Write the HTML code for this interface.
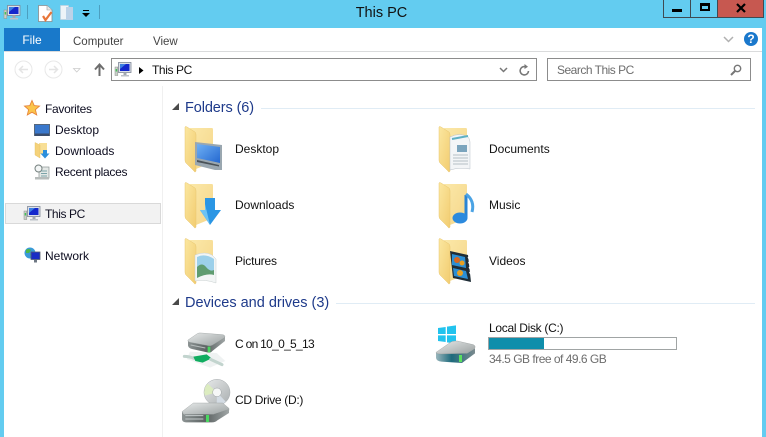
<!DOCTYPE html>
<html><head><meta charset="utf-8"><title>This PC</title>
<style>
html,body{margin:0;padding:0;width:766px;height:437px;overflow:hidden;background:#63ccf0}
body{position:relative;font-family:"Liberation Sans",sans-serif;font-size:12px;color:#000}
.a{position:absolute}
.t{position:absolute;white-space:nowrap;line-height:14px}
.h{position:absolute;white-space:nowrap;font-size:14.5px;line-height:18px;color:#1e3a8a}
svg{position:absolute;overflow:visible}
</style></head><body>
<svg width="0" height="0" style="position:absolute"><defs>
<linearGradient id="fb" x1="0" y1="0" x2="1" y2="1"><stop offset="0" stop-color="#fbe8a8"/><stop offset="1" stop-color="#f5d68a"/></linearGradient>
<linearGradient id="ff" x1="0" y1="0" x2="1" y2="1"><stop offset="0" stop-color="#fbe7a0"/><stop offset="1" stop-color="#f2cc70"/></linearGradient>
<linearGradient id="top" x1="0" y1="0" x2="1" y2="1"><stop offset="0" stop-color="#e6e9e9"/><stop offset="1" stop-color="#9ba1a1"/></linearGradient>
<linearGradient id="frn" x1="0" y1="0" x2="1" y2="0"><stop offset="0" stop-color="#8d9494"/><stop offset=".5" stop-color="#5b6262"/><stop offset="1" stop-color="#a0a6a6"/></linearGradient>
<linearGradient id="tealf" x1="0" y1="0" x2="1" y2="0"><stop offset="0" stop-color="#9ab6bc"/><stop offset=".4" stop-color="#1d6a7c"/><stop offset="1" stop-color="#7b8a8e"/></linearGradient>
<linearGradient id="cd" x1="0" y1="0" x2="1" y2="1"><stop offset="0" stop-color="#e8eaea"/><stop offset="1" stop-color="#a9aeb0"/></linearGradient>
<linearGradient id="scr" x1="0" y1="0" x2="1" y2="1"><stop offset="0" stop-color="#6fb0f4"/><stop offset="1" stop-color="#2468d0"/></linearGradient>
<g id="folder"><path d="M5 3H27Q28 3 28 5V37L11 44Z" fill="url(#fb)"/><path d="M0 2Q0 1 2 2L10 7Q11 8 11 10V46Q10 48 9 46L1 38Q0 37 0 35Z" fill="url(#ff)" stroke="#e8c670" stroke-width=".5"/></g>
<g id="pc"><rect x="3.500" y="1.500" width="12.500" height="10" fill="#dde1e8" stroke="#7f8896" stroke-width=".8"/><rect x="5" y="3" width="9.500" height="7" fill="#1428cc"/><path d="M5 3h6l-6 5z" fill="#3d80e2"/><rect x="8.500" y="11.500" width="3" height="2.500" fill="#a2a8b0"/><rect x="6" y="14" width="8" height="1.500" fill="#bcc1c8"/><rect x="0" y="6" width="2.800" height="8.500" fill="#c9cfc9" stroke="#8b938b" stroke-width=".5"/><rect x=".7" y="8" width="1.400" height="2.500" fill="#45c45a"/></g>
</defs></svg>

<!-- title bar -->
<svg style="left:4px;top:4px" width="17" height="16" viewBox="0 0 17 16"><use href="#pc"/></svg>
<div class="a" style="left:27px;top:5px;width:1px;height:14px;background:#4c9fc0"></div>
<svg style="left:38px;top:5px" width="15" height="17" viewBox="0 0 15 17"><path d="M.5 .5H9L14 5V16.500H.5Z" fill="#fff" stroke="#8a8a8a" stroke-width=".8"/><path d="M9 .5V5H14" fill="#e8e8e8" stroke="#999" stroke-width=".6"/><path d="M5 11L7.500 15L13.500 7" fill="none" stroke="#e8763a" stroke-width="2.200"/></svg>
<svg style="left:60px;top:5px" width="14" height="16" viewBox="0 0 14 16"><rect x=".5" y=".5" width="8" height="14" fill="#eef3f8" stroke="#c3d0df" stroke-width=".7"/><rect x="6" y="2" width="7" height="13" fill="#bcd2e8"/></svg>
<svg style="left:82px;top:10px" width="8" height="8" viewBox="0 0 8 8"><rect x="1" y="0" width="6" height="1" fill="#000"/><path d="M0 3H8L4 7Z" fill="#000"/></svg>
<div class="a" style="left:99px;top:5px;width:1px;height:14px;background:#4c9fc0"></div>
<div class="t" style="left:330px;width:103px;text-align:center;top:5px;font-size:14.500px;line-height:16px;color:#111">This PC</div>

<!-- window buttons -->
<div class="a" style="left:663px;top:0;width:28px;height:18px;border:1px solid #3f4a52;border-top:0;box-sizing:border-box;background:#63ccf0"></div>
<div class="a" style="left:672px;top:9px;width:10px;height:3px;background:#000"></div>
<div class="a" style="left:691px;top:0;width:27px;height:18px;border:1px solid #3f4a52;border-top:0;border-left:0;box-sizing:border-box;background:#63ccf0"></div>
<div class="a" style="left:700px;top:3px;width:10px;height:8px;border:2px solid #000;border-top-width:3px;box-sizing:border-box"></div>
<div class="a" style="left:718px;top:0;width:46px;height:18px;border:1px solid #3f4a52;border-top:0;border-left:0;box-sizing:border-box;background:#c75850"></div>
<svg style="left:736px;top:4px" width="10" height="8" viewBox="0 0 10 8"><path d="M1 0L9 8M9 0L1 8" stroke="#000" stroke-width="2.200" fill="none"/></svg>

<!-- main white area -->
<div class="a" style="left:4px;top:28px;width:758px;height:409px;background:#fff"></div>
<div class="a" style="left:4px;top:51px;width:758px;height:1px;background:#dadbdc"></div>
<div class="a" style="left:4px;top:28px;width:56px;height:23px;background:#1979ca"></div>
<div class="t" style="left:4px;width:56px;text-align:center;top:33px;color:#fff">File</div>
<div class="t" style="left:73px;top:35px;font-size:11.500px;color:#444">Computer</div>
<div class="t" style="left:153px;top:35px;font-size:11.500px;color:#444">View</div>
<svg style="left:723px;top:36px" width="11" height="7" viewBox="0 0 11 7"><path d="M1 1L5.500 5.500L10 1" fill="none" stroke="#b0b0b0" stroke-width="1.500"/></svg>
<div class="a" style="left:744px;top:32px;width:14px;height:14px;border-radius:50%;background:#1a78cc;color:#fff;font-weight:bold;font-size:12px;line-height:14px;text-align:center">?</div>

<!-- nav -->
<svg style="left:14px;top:60px" width="20" height="20" viewBox="0 0 20 20"><circle cx="9.500" cy="9.500" r="8.500" fill="none" stroke="#e8e8e8"/><path d="M14 9.500H6M9 6L5.500 9.500L9 13" fill="none" stroke="#e4e4e4" stroke-width="1.500"/></svg>
<svg style="left:44px;top:60px" width="20" height="20" viewBox="0 0 20 20"><circle cx="9.500" cy="9.500" r="8.500" fill="none" stroke="#e8e8e8"/><path d="M5 9.500H13M10 6L13.500 9.500L10 13" fill="none" stroke="#e4e4e4" stroke-width="1.500"/></svg>
<svg style="left:73px;top:68px" width="8" height="5" viewBox="0 0 8 5"><path d="M.5 .5H7L3.750 4Z" fill="#fff" stroke="#ccc" stroke-width=".8"/></svg>
<svg style="left:94px;top:63px" width="11" height="13" viewBox="0 0 11 13"><path d="M5.500 13V2M1 6.500L5.500 1.500L10 6.500" fill="none" stroke="#6d6d6d" stroke-width="2"/></svg>
<div class="a" style="left:111px;top:58px;width:426px;height:23px;border:1px solid #8c8c8c;box-sizing:border-box;background:#fff"></div>
<svg style="left:115px;top:61px" width="17" height="16" viewBox="0 0 17 16"><use href="#pc"/></svg>
<svg style="left:139px;top:67px" width="5" height="7" viewBox="0 0 5 7"><path d="M0 0L4.500 3.500L0 7Z" fill="#000"/></svg>
<div class="t" style="left:152px;top:63px;color:#111;letter-spacing:-.4px">This PC</div>
<svg style="left:499px;top:67px" width="9" height="6" viewBox="0 0 9 6"><path d="M1 1L4.500 4.500L8 1" fill="none" stroke="#777" stroke-width="1.500"/></svg>
<svg style="left:519px;top:64px" width="11" height="12" viewBox="0 0 11 12"><path d="M9.500 7A4.200 4.200 0 1 1 6 2.600" fill="none" stroke="#777" stroke-width="1.600"/><path d="M5.500 0L9 2.700L5.500 5Z" fill="#777"/></svg>
<div class="a" style="left:547px;top:58px;width:204px;height:23px;border:1px solid #8c8c8c;box-sizing:border-box;background:#fff"></div>
<div class="t" style="left:557px;top:63px;color:#6d6d6d;letter-spacing:-.5px">Search This PC</div>
<svg style="left:730px;top:64px" width="12" height="12" viewBox="0 0 12 12"><circle cx="7.500" cy="4.500" r="3.200" fill="none" stroke="#777" stroke-width="1.400"/><path d="M5 7L1 11" stroke="#777" stroke-width="2"/></svg>

<!-- sidebar -->
<div class="a" style="left:162px;top:86px;width:1px;height:351px;background:#f0f0f0"></div>
<svg style="left:24px;top:100px" width="16" height="16" viewBox="0 0 16 16"><path d="M8 .5L10.200 5.600L15.500 6.100L11.400 9.700L12.700 15L8 12.200L3.300 15L4.600 9.700L.5 6.100L5.800 5.600Z" fill="#fbc54c" stroke="#e8853a" stroke-width=".9"/></svg>
<div class="t" style="left:45px;top:102px;color:#0d0d20;letter-spacing:-.3px">Favorites</div>
<svg style="left:34px;top:124px" width="16" height="13" viewBox="0 0 16 13"><rect x=".5" y=".5" width="15" height="11" fill="#3a78cc" stroke="#56677c"/><rect x="1" y="9.500" width="14" height="2.500" fill="#3a4d6c"/></svg>
<div class="t" style="left:55px;top:123px;color:#0d0d20">Desktop</div>
<svg style="left:35px;top:142px" width="15" height="17" viewBox="0 0 15 17"><path d="M4 1H12V12H4Z" fill="#f8df96"/><path d="M0 .5L5 3V16L0 13Z" fill="#f5d27a" stroke="#e0bb60" stroke-width=".4"/><path d="M8 8H12V11.500H14.500L10 16.500L5.500 11.500H8Z" fill="#2c8fdc"/></svg>
<div class="t" style="left:55px;top:144px;color:#0d0d20">Downloads</div>
<svg style="left:34px;top:164px" width="16" height="16" viewBox="0 0 16 16"><rect x="5" y="3" width="10" height="11" fill="#e4e8e6" stroke="#8b9493" stroke-width=".7"/><circle cx="4.500" cy="4.500" r="3.500" fill="#f3f6f6" stroke="#75807f"/><path d="M7 7h6M7 9.500h6M7 12h6" stroke="#7ba3a8"/><rect x="1" y="13" width="14" height="2.500" fill="#b7bcbb"/></svg>
<div class="t" style="left:55px;top:165px;color:#0d0d20;letter-spacing:-.3px">Recent places</div>
<div class="a" style="left:5px;top:203px;width:156px;height:21px;background:#f2f2f2;border:1px solid #d9d9d9;box-sizing:border-box"></div>
<svg style="left:24px;top:205px" width="17" height="16" viewBox="0 0 17 16"><use href="#pc"/></svg>
<div class="t" style="left:45px;top:207px;color:#0d0d20;letter-spacing:-.4px">This PC</div>
<svg style="left:24px;top:247px" width="17" height="16" viewBox="0 0 17 16"><circle cx="6" cy="6" r="5.500" fill="#3a9ad9"/><path d="M2 3Q5 1 7 3L5 6L2 6ZM6 7L10 8L8 11Z" fill="#4cb848"/><rect x="7" y="5" width="9" height="7.500" fill="#1a2cc4" stroke="#55606e" stroke-width=".8"/><rect x="10" y="12.500" width="3" height="3" fill="#6f7884"/></svg>
<div class="t" style="left:45px;top:249px;color:#0d0d20">Network</div>

<!-- Folders header -->
<svg style="left:172px;top:103px" width="7" height="7" viewBox="0 0 7 7"><path d="M7 0V7H0Z" fill="#4a4a4a"/></svg>
<div class="h" style="left:185px;top:99px;letter-spacing:-.1px">Folders (6)</div>
<div class="a" style="left:261px;top:108px;width:494px;height:1px;background:#e0ecf5"></div>

<!-- folder items -->
<svg style="left:185px;top:125px" width="40" height="50" viewBox="0 0 40 50"><use href="#folder"/><path d="M10 17L37 20V45L30 45L10 40Z" fill="#9aa7b0"/><path d="M12 19L35 22V38L12 33Z" fill="url(#scr)"/><path d="M12 35L34 40V41.500L12 37Z" fill="#4a5258"/></svg>
<div class="t" style="left:235px;top:142px;color:#111">Desktop</div>
<svg style="left:185px;top:181px" width="40" height="50" viewBox="0 0 40 50"><use href="#folder"/><path d="M20 17H30V29H36L25 44L15 29H20Z" fill="#2b96e4"/><path d="M25 44L15 29H20V23Z" fill="#6cc3f4"/></svg>
<div class="t" style="left:235px;top:198px;color:#111">Downloads</div>
<svg style="left:185px;top:237px" width="40" height="50" viewBox="0 0 40 50"><use href="#folder"/><path d="M10 18Q20 14 27 18L31 22V46Q20 42 10 44Z" fill="#f2f5f5" stroke="#c9d0d0" stroke-width=".5"/><path d="M12 20Q20 16 29 22V36Q22 32 12 37Z" fill="#9cd0ea"/><path d="M12 39V30Q17 25 21 30T29 33V38Q22 36 12 41Z" fill="#5f9c70"/></svg>
<div class="t" style="left:235px;top:254px;color:#111;letter-spacing:-.2px">Pictures</div>

<svg style="left:439px;top:125px" width="40" height="50" viewBox="0 0 40 50"><use href="#folder"/><path d="M11 12Q21 7 29 12Q31 14 31 17V44Q21 42 11 45Z" fill="#f3f5f7" stroke="#b9c1c9" stroke-width=".5"/><path d="M13 14L29 11" stroke="#5fb0c4" stroke-width="2"/><rect x="18" y="20" width="10" height="7" fill="#7ba4bd"/><path d="M14 30H29M14 33H29M14 36H29M14 39H29" stroke="#b6bec5"/></svg>
<div class="t" style="left:489px;top:142px;color:#111">Documents</div>
<svg style="left:439px;top:181px" width="40" height="50" viewBox="0 0 40 50"><use href="#folder"/><path d="M27 14V37" stroke="#2b84d4" stroke-width="3"/><path d="M27 13Q36 20 33 31" fill="none" stroke="#4ba3e4" stroke-width="3"/><ellipse cx="21" cy="37" rx="7.500" ry="5.500" fill="#2c8ade"/></svg>
<div class="t" style="left:489px;top:198px;color:#111">Music</div>
<svg style="left:439px;top:237px" width="40" height="50" viewBox="0 0 40 50"><use href="#folder"/><path d="M11 14L29 18L32 45L14 41Z" fill="#1f2d36"/><path d="M13 17L26 20L27 31L13 28Z" fill="#2b8fd4"/><path d="M14 31L27 34L29 42L15 39Z" fill="#2b8fd4"/><circle cx="18" cy="23" r="3" fill="#d8661e"/><circle cx="23" cy="26" r="2.500" fill="#e8a020"/><circle cx="21" cy="36" r="3" fill="#e8a020"/><path d="M29 20L30 22M29.500 25L30.500 27M30 30L31 32M30.500 35L31.500 37" stroke="#fff" stroke-width="1"/></svg>
<div class="t" style="left:489px;top:254px;color:#111">Videos</div>

<!-- Devices header -->
<svg style="left:172px;top:298px" width="7" height="7" viewBox="0 0 7 7"><path d="M7 0V7H0Z" fill="#4a4a4a"/></svg>
<div class="h" style="left:185px;top:294px">Devices and drives (3)</div>
<div class="a" style="left:336px;top:303px;width:419px;height:1px;background:#e0ecf5"></div>

<!-- drives -->
<svg style="left:180px;top:325px" width="50" height="50" viewBox="0 0 150 150">
<path d="M24 46V62Q26 70 36 72L85 83Q92 84 97 78L135 48V36L96 60Z" fill="url(#frn)"/>
<path d="M24 45L52 26Q56 23 64 24L128 29Q137 31 134 38L98 60Q92 64 84 62L30 52Q22 50 24 45Z" fill="url(#top)" stroke="#8d9393" stroke-width="1"/>
<path d="M83 65H91V82H83Z" fill="#49d860"/>
<path d="M32 60L76 69" stroke="#b6bcbc" stroke-width="3"/>
<path d="M30 80L110 84L136 108L90 128L20 102Z" fill="#e8ecec" opacity=".7"/>
<path d="M13 94Q28 94 42 100" stroke="#c2d4ce" stroke-width="9" fill="none" stroke-linecap="round"/>
<path d="M40 95L80 88L95 100L68 113L46 108Z" fill="#10ad60"/>
<path d="M92 103L126 119" stroke="#c2d4ce" stroke-width="9" stroke-linecap="round"/>
</svg>
<div class="t" style="left:235px;top:337px;color:#111;letter-spacing:-.7px">C on 10_0_5_13</div>

<svg style="left:180px;top:375px" width="50" height="55" viewBox="0 0 150 165">
<circle cx="111" cy="52" r="39" fill="url(#cd)" stroke="#a5aaad" stroke-width="1.500"/>
<path d="M111 52L83 26A39 39 0 0 0 74 62Z" fill="#dcecc0"/>
<path d="M111 52L137 80A39 39 0 0 1 110 91Z" fill="#d4dce4"/>
<circle cx="111" cy="52" r="13" fill="#f6f7f7" stroke="#9aa0a3" stroke-width="1.500"/>
<path d="M6 110L40 84H128L147 100V106L100 118H14Z" fill="url(#top)" stroke="#8d9393" stroke-width="1"/>
<path d="M6 110V134Q8 142 18 142H96Q106 142 112 136L147 114V102L100 118H12Z" fill="url(#frn)"/>
<path d="M16 122H70M16 132H70" stroke="#c4cacb" stroke-width="3"/>
<path d="M78 120H87V141H78Z" fill="#49d860"/>
</svg>
<div class="t" style="left:235px;top:393px;color:#111;letter-spacing:-.3px">CD Drive (D:)</div>

<svg style="left:432px;top:320px" width="50" height="50" viewBox="0 0 150 150">
<path d="M18 24L41 21V42H18ZM45 20L72 16V42H45ZM18 46H41V66L18 63ZM45 46H72V71L45 67Z" fill="#22c3ee"/>
<path d="M12 98V114Q14 124 28 125L90 129L129 100V85L105 100Z" fill="url(#tealf)"/>
<path d="M12 97L54 68Q60 62 76 63L124 74Q132 78 128 85L104 100L28 102Q12 102 12 97Z" fill="url(#top)" stroke="#8d9393" stroke-width="1"/>
<path d="M81 105H90V126H81Z" fill="#5ae05f"/>
</svg>
<div class="t" style="left:489px;top:321px;color:#111;letter-spacing:-.3px">Local Disk (C:)</div>
<div class="a" style="left:488px;top:337px;width:189px;height:13px;border:1px solid #a0a4a4;box-sizing:border-box;background:#fff"></div>
<div class="a" style="left:489px;top:338px;width:55px;height:11px;background:#0f8eab"></div>
<div class="t" style="left:489px;top:352px;color:#6d6d6d;letter-spacing:-.5px">34.5 GB free of 49.6 GB</div>
</body></html>
